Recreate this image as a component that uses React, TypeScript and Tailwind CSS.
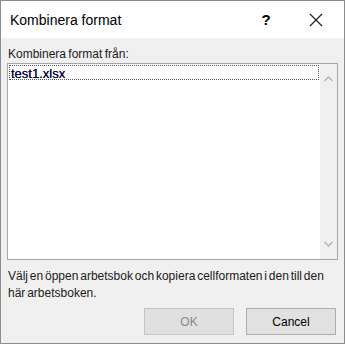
import React from 'react';

const font = { fontFamily: '"Liberation Sans", Arial, sans-serif' };

export default function App() {
  return (
    <div className="w-[345px] h-[344px] bg-[#f0f0f0] border border-[#8c8c8c] flex flex-col text-black" style={font}>
      {/* Title bar */}
      <div className="h-[37px] bg-white flex items-center shrink-0">
        <div className="pl-[9px] pt-[1px] text-[14px] leading-none flex-1">Kombinera format</div>
        <div className="w-[50px] text-center text-[15px] font-semibold leading-none">?</div>
        <div className="w-[50px] mr-[3px] flex justify-center">
          <svg width="14" height="14" viewBox="0 0 14 14" stroke="#222" strokeWidth="1.2" fill="none">
            <path d="M1 1 L13 13 M13 1 L1 13" />
          </svg>
        </div>
      </div>

      {/* Body */}
      <div className="flex-1 flex flex-col px-[6px]">
        <div className="mt-[9px] pl-[1px] text-[12px] leading-[15px] text-[#1a1a1a] [word-spacing:-1px]">Kombinera format från:</div>
        <div className="mt-[1px] h-[197px] w-[331px] border border-[#a6a6a6] bg-white flex">
          <div className="flex-1 pt-[1px] pl-[1px] pr-[1px]">
            <div className="h-[15px] border border-dotted border-[#555] flex items-center pl-[1px] pt-[1px] text-[13px] leading-none text-[#0a0a40] [text-shadow:0_0_0.3px_#0a0a40]">
              test1.xlsx
            </div>
          </div>
          <div className="w-[17px] bg-[#f0f0f0] flex flex-col justify-between items-center py-[12px]">
            <svg width="9" height="6" viewBox="0 0 9 6" fill="none" stroke="#b3b3b3" strokeWidth="1.4">
              <path d="M0.5 5 L4.5 1 L8.5 5" />
            </svg>
            <svg width="9" height="6" viewBox="0 0 9 6" fill="none" stroke="#b3b3b3" strokeWidth="1.4">
              <path d="M0.5 1 L4.5 5 L8.5 1" />
            </svg>
          </div>
        </div>
        <div className="mt-[8px] pl-[1px] w-[331px] text-[12px] leading-[17px] text-[#1a1a1a] [word-spacing:-1.5px]">
          Välj en öppen arbetsbok och kopiera cellformaten i den till den här arbetsboken.
        </div>
        <div className="mt-auto mb-[8px] flex justify-end gap-[12px] pr-[2px]">
          <button className="w-[90px] h-[27px] bg-[#e0e0e0] border border-[#c4c4c4] text-[12px] text-[#8a8a8a]">OK</button>
          <button className="w-[90px] h-[27px] bg-[#e1e1e1] border border-[#adadad] text-[12px] text-black">Cancel</button>
        </div>
      </div>
    </div>
  );
}
